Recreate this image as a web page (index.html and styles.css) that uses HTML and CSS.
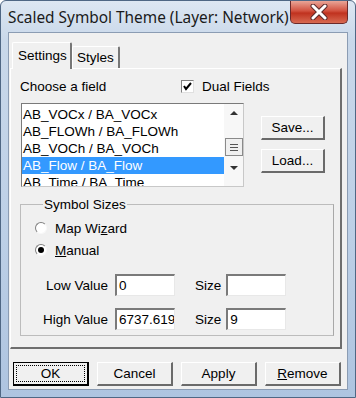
FILE: index.html
```html
<!DOCTYPE html>
<html lang="en">
<head>
    <meta charset="UTF-8">
    <title>Scaled Symbol Theme</title>
    <link rel="stylesheet" href="styles.css">
</head>
<body>
<div class="window">
    <div class="titlebar">
        <div class="title">Scaled Symbol Theme (Layer: Network)</div>
        <div class="close">
            <svg width="20" height="16" viewBox="0 0 20 16">
                <path d="M4 2 L16 14 M16 2 L4 14" stroke="#5a2a2a" stroke-width="5" stroke-linecap="round"/>
                <path d="M4 2 L16 14 M16 2 L4 14" stroke="#fff" stroke-width="3" stroke-linecap="round"/>
            </svg>
        </div>
    </div>
    <div class="client">
        <div class="tabs">
            <div class="tab active">Settings</div>
            <div class="tab">Styles</div>
        </div>
        <div class="panel">
            <div class="field-row">
                <span class="field-label">Choose a field</span>
                <label class="check">
                    <span class="checkbox">
                        <svg width="9" height="9" viewBox="0 0 9 9"><path d="M1 4 L3 7 L8 1" stroke="#000" stroke-width="2" fill="none"/></svg>
                    </span>
                    Dual Fields
                </label>
            </div>
            <div class="list-row">
                <div class="listbox">
                    <ul class="items">
                        <li>AB_VOCx / BA_VOCx</li>
                        <li>AB_FLOWh / BA_FLOWh</li>
                        <li>AB_VOCh / BA_VOCh</li>
                        <li class="selected">AB_Flow / BA_Flow</li>
                        <li>AB_Time / BA_Time</li>
                    </ul>
                    <div class="scrollbar">
                        <span class="arrow up"></span>
                        <span class="thumb"><i></i><i></i><i></i></span>
                        <span class="arrow down"></span>
                    </div>
                </div>
                <div class="side-buttons">
                    <div class="btn small">Save...</div>
                    <div class="btn small">Load...</div>
                </div>
            </div>
            <fieldset class="group">
                <legend>Symbol Sizes</legend>
                <div class="radio-row"><span class="radio"></span>Map Wi<u>z</u>ard</div>
                <div class="radio-row"><span class="radio on"></span><u>M</u>anual</div>
                <div class="value-row first">
                    <span class="vlabel">Low Value</span>
                    <span class="textbox">0</span>
                    <span class="slabel">Size</span>
                    <span class="textbox"></span>
                </div>
                <div class="value-row">
                    <span class="vlabel">High Value</span>
                    <span class="textbox">6737.6190</span>
                    <span class="slabel">Size</span>
                    <span class="textbox">9</span>
                </div>
            </fieldset>
        </div>
        <div class="buttons">
            <div class="btn default"><span class="focus">OK</span></div>
            <div class="btn">Cancel</div>
            <div class="btn">Apply</div>
            <div class="btn"><u>R</u>emove</div>
        </div>
    </div>
</div>
</body>
</html>
```

FILE: styles.css
```css
* {
    margin: 0;
    padding: 0;
    box-sizing: border-box;
    list-style: none;
}

body {
    width: 356px;
    height: 398px;
    overflow: hidden;
    font-family: "Liberation Sans", Arial, sans-serif;
    font-size: 13.5px;
    color: #000;
}

.window {
    width: 356px;
    height: 398px;
    border: 1px solid #4f6784;
    border-radius: 6px 6px 0 0;
    background: linear-gradient(180deg, #dde7f2 0%, #c9d8ea 10%, #bccfe6 60%, #aec4e0 100%);
    display: flex;
    flex-direction: column;
}

.titlebar {
    height: 31px;
    display: flex;
    justify-content: space-between;
    align-items: flex-start;
    padding-left: 7px;
}

.title {
    font-family: "Noto Sans", sans-serif;
    font-size: 15.4px;
    margin-top: 6px;
    color: #1a1a1a;
}

.close {
    width: 58px;
    height: 23px;
    margin-right: 7px;
    border: 1px solid #6b2a2a;
    border-top: none;
    border-radius: 0 0 5px 5px;
    background: linear-gradient(180deg, #e9a597 0%, #d2513f 45%, #c0321f 55%, #d86a52 100%);
    display: flex;
    align-items: center;
    justify-content: center;
}

.client {
    margin: 0 7px;
    height: 358px;
    background: #f0f0f0;
    border: 1px solid #8b9cb3;
}

.tabs {
    display: flex;
    align-items: flex-end;
    padding: 8px 0 0 3px;
    height: 35px;
}

.tab {
    height: 22px;
    padding: 3px 4px 0 4px;
    border-left: 1px solid #fff;
    border-top: 1px solid #fff;
    border-right: 2px solid #777;
    border-radius: 2px 2px 0 0;
}

.tab.active {
    height: 27px;
    width: 60px;
    padding: 5px 0 0 5px;
    position: relative;
    z-index: 1;
    margin-bottom: -1px;
    background: #f0f0f0;
}

.panel {
    margin: 0 5px 0 1px;
    height: 281px;
    border-left: 1px solid #fff;
    border-top: 1px solid #fff;
    border-right: 2px solid #6e6e6e;
    border-bottom: 2px solid #6e6e6e;
    padding: 9px 0 0 9px;
}

.field-row {
    display: flex;
    align-items: center;
    height: 16px;
}

.field-label {
    width: 161px;
}

.check {
    display: flex;
    align-items: center;
    gap: 8px;
}

.checkbox {
    width: 13px;
    height: 13px;
    background: #fff;
    border-top: 1px solid #808080;
    border-left: 1px solid #808080;
    border-right: 1px solid #e0e0e0;
    border-bottom: 1px solid #e0e0e0;
    display: flex;
    align-items: center;
    justify-content: center;
}

.list-row {
    display: flex;
    margin-top: 9px;
}

.listbox {
    width: 223px;
    height: 84px;
    margin-left: 1px;
    background: #fff;
    border: 1px solid #7a7a7a;
    border-right-color: #c8c8c8;
    border-bottom-color: #c8c8c8;
    display: flex;
    overflow: hidden;
}

.items {
    flex: 1;
    font-size: 13.5px;
    padding-top: 2px;
}

.items li {
    height: 17px;
    line-height: 17px;
    padding-left: 1px;
    white-space: nowrap;
}

.items .selected {
    background: #3399ff;
    color: #fff;
}

.scrollbar {
    width: 19px;
    display: flex;
    flex-direction: column;
    align-items: center;
    background: #f7f7f7;
}

.arrow {
    width: 0;
    height: 0;
    border-left: 4px solid transparent;
    border-right: 4px solid transparent;
}

.arrow.up {
    margin-top: 7px;
    border-bottom: 4px solid #333;
}

.arrow.down {
    margin-top: 10px;
    border-top: 4px solid #333;
}

.thumb {
    margin-top: 23px;
    width: 18px;
    height: 18px;
    border: 1px solid #8a8a8a;
    background: #f0f0f0;
    display: flex;
    flex-direction: column;
    justify-content: center;
    align-items: center;
    gap: 2px;
}

.thumb i {
    display: block;
    width: 8px;
    height: 1px;
    background: #555;
}

.side-buttons {
    display: flex;
    flex-direction: column;
    margin-left: 17px;
    margin-top: 13px;
    gap: 9px;
}

.btn {
    height: 24px;
    width: 76px;
    border-top: 1px solid #fff;
    border-left: 1px solid #fff;
    border-right: 2px solid #6a6a6a;
    border-bottom: 2px solid #6a6a6a;
    background: #f0f0f0;
    display: flex;
    align-items: center;
    justify-content: center;
}

.btn.small {
    width: 64px;
}

.group {
    margin-top: 10px;
    width: 314px;
    height: 139px;
    border: 1px solid #bcbcbc;
    border-right-color: #a8a8a8;
    padding: 5px 0 0 14px;
}

.group legend {
    margin-left: 8px;
    padding: 0 1px;
}

.radio-row {
    display: flex;
    align-items: center;
    height: 22px;
}

.radio {
    width: 12px;
    height: 12px;
    border-radius: 50%;
    margin-right: 8px;
    border: 1px solid;
    border-color: #808080 #f8f8f8 #f8f8f8 #808080;
    background: #fff;
    display: flex;
    align-items: center;
    justify-content: center;
}

.radio.on::after {
    content: "";
    width: 6px;
    height: 6px;
    border-radius: 50%;
    background: #000;
}

.value-row {
    display: flex;
    align-items: center;
    margin-top: 12px;
}

.value-row.first {
    margin-top: 13px;
}

.vlabel {
    width: 73px;
    text-align: right;
    margin-right: 7px;
}

.slabel {
    margin: 0 5px 0 20px;
}

.textbox {
    width: 60px;
    height: 22px;
    background: #fff;
    border-top: 2px solid #7a7a7a;
    border-left: 2px solid #7a7a7a;
    border-right: 1px solid #e8e8e8;
    border-bottom: 1px solid #e8e8e8;
    padding-left: 2px;
    line-height: 19px;
    overflow: hidden;
    white-space: nowrap;
}

.buttons {
    display: flex;
    gap: 8px;
    padding: 13px 0 0 4px;
}

.btn.default {
    border: 1px solid #000;
    border-right: 2px solid #000;
    border-bottom: 2px solid #000;
    padding: 2px;
}

.focus {
    width: 100%;
    height: 100%;
    border: 1px dotted #000;
    display: flex;
    align-items: center;
    justify-content: center;
}
```
